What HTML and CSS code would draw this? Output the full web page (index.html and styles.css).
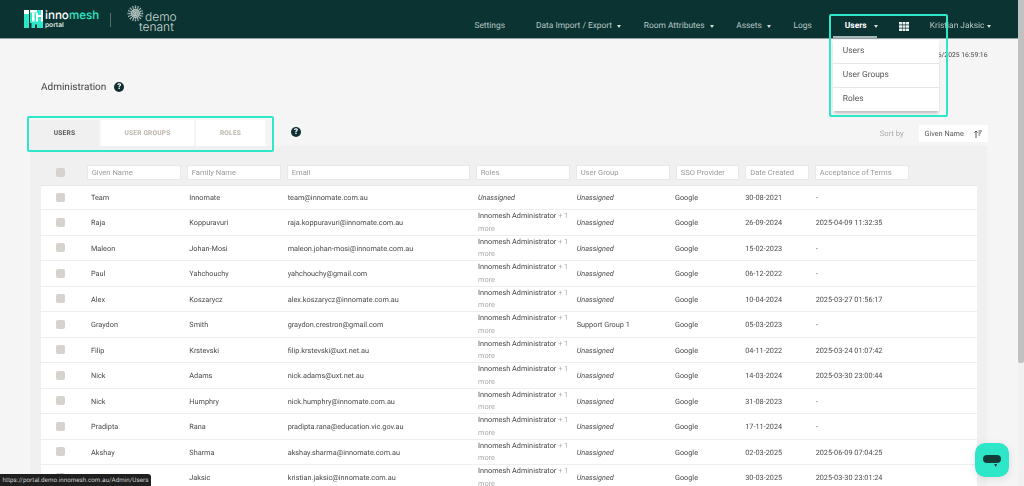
FILE: index.html
```html
<!DOCTYPE html>
<html lang="en">
<head>
    <meta charset="UTF-8">
    <title>Administration - innomesh portal</title>
    <link rel="stylesheet" href="styles.css">
</head>
<body>
    <div class="page">
        <div class="main">
            <header class="topbar">
                <div class="brand">
                    <svg class="brand-mark" width="19" height="18" viewBox="0 0 19 18">
                        <rect width="19" height="18" fill="#2ee6c8"/>
                        <rect x="0" y="0" width="5" height="4" fill="#fff"/>
                        <rect x="6" y="0" width="7" height="2.5" fill="#fff"/>
                        <rect x="8" y="2.5" width="2.5" height="9" fill="#fff"/>
                        <rect x="12" y="3" width="2" height="8.5" fill="#fff"/>
                        <rect x="17" y="0" width="2" height="11.5" fill="#fff"/>
                        <rect x="14" y="5" width="3" height="2" fill="#fff"/>
                        <rect x="5.5" y="13" width="2" height="5" fill="#0a3331"/>
                        <rect x="11" y="14.5" width="2" height="3.5" fill="#0a3331"/>
                        <rect x="5" y="0" width="1" height="18" fill="#0a3331"/>
                    </svg>
                    <div class="brand-name">
                        <div class="brand-title">inno<span>mesh</span></div>
                        <div class="brand-sub">portal</div>
                    </div>
                    <div class="brand-divider"></div>
                    <div class="tenant">
                        <svg class="tenant-mark" width="17" height="17" viewBox="-9 -9 18 18">
                            <g stroke="#b4c4c1" stroke-width="1.4" stroke-dasharray="1.3 .4" fill="none">
                                <path d="M0 -8.5V8.5M-8.5 0H8.5M-6 -6L6 6M-6 6L6 -6M-3.2 -7.8L3.2 7.8M3.2 -7.8L-3.2 7.8M-7.8 -3.2L7.8 3.2M-7.8 3.2L7.8 -3.2"/>
                                <circle r="4"/>
                            </g>
                        </svg>
                        <div class="tenant-name"><span>demo</span><span class="tenant-second">tenant</span></div>
                    </div>
                </div>
                <nav class="nav">
                    <a class="nav-link plain">Settings</a>
                    <a class="nav-link">Data Import / Export<i class="caret"></i></a>
                    <a class="nav-link">Room Attributes<i class="caret"></i></a>
                    <a class="nav-link">Assets<i class="caret"></i></a>
                    <a class="nav-link plain logs">Logs</a>
                    <div class="nav-menu">
                        <a class="nav-link active"><span class="active-label">Users</span><i class="caret"></i></a>
                        <ul class="dropdown">
                            <li>Users</li>
                            <li>User Groups</li>
                            <li>Roles</li>
                        </ul>
                    </div>
                    <svg class="grid-icon" width="10" height="9" viewBox="0 0 10 9">
                        <path fill="#e9efee" d="M0 0h3v2.6H0zM3.5 0h3v2.6h-3zM7 0h3v2.6H7zM0 3.2h3v2.6H0zM3.5 3.2h3v2.6h-3zM7 3.2h3v2.6H7zM0 6.4h3V9H0zM3.5 6.4h3V9h-3zM7 6.4h3V9H7z"/>
                    </svg>
                    <a class="nav-link user">Kristian Jaksic<i class="caret small"></i></a>
                </nav>
            </header>

            <div class="content">
                <div class="sync-time">26/06/2025 16:59:16</div>
                <div class="title-row">
                    <h1>Administration</h1>
                    <span class="help">?</span>
                </div>
                <div class="toolbar">
                    <div class="tabs">
                        <div class="tab selected">Users</div>
                        <div class="tab wide">User Groups</div>
                        <div class="tab">Roles</div>
                    </div>
                    <span class="help tabs-help">?</span>
                    <div class="sort">
                        <span class="sort-label">Sort by</span>
                        <div class="sort-select">
                            <span>Given Name</span>
                            <svg width="8" height="8" viewBox="0 0 8 8">
                                <path fill="none" stroke="#444" stroke-width=".9" d="M2 8V1M.5 2.5L2 1l1.500 1.500M4.500 1H8M4.500 3H7M4.500 5H6"/>
                            </svg>
                        </div>
                    </div>
                </div>

                <div class="panel">
                    <div class="filters">
                        <span class="check"></span>
                        <input class="filter" placeholder="Given Name">
                        <input class="filter" placeholder="Family Name">
                        <input class="filter email" placeholder="Email">
                        <input class="filter" placeholder="Roles">
                        <input class="filter" placeholder="User Group">
                        <input class="filter short" placeholder="SSO Provider">
                        <input class="filter short" placeholder="Date Created">
                        <input class="filter" placeholder="Acceptance of Terms">
                    </div>
                    <div class="rows">
                        <div class="row first">
                            <span class="check"></span><span>Team</span><span>Innomate</span><span>team@innomate.com.au</span>
                            <em>Unassigned</em><em>Unassigned</em><span>Google</span><span>30-08-2021</span><span>-</span>
                        </div>
                        <div class="row">
                            <span class="check"></span><span>Raja</span><span>Koppuravuri</span><span>raja.koppuravuri@innomate.com.au</span>
                            <div class="role">Innomesh Administrator <span>+ 1 more</span></div><em>Unassigned</em><span>Google</span><span>26-09-2024</span><span>2025-04-09 11:32:35</span>
                        </div>
                        <div class="row">
                            <span class="check"></span><span>Maleon</span><span>Johan-Mosi</span><span>maleon.johan-mosi@innomate.com.au</span>
                            <div class="role">Innomesh Administrator <span>+ 1 more</span></div><em>Unassigned</em><span>Google</span><span>15-02-2023</span><span>-</span>
                        </div>
                        <div class="row">
                            <span class="check"></span><span>Paul</span><span>Yahchouchy</span><span>yahchouchy@gmail.com</span>
                            <div class="role">Innomesh Administrator <span>+ 1 more</span></div><em>Unassigned</em><span>Google</span><span>06-12-2022</span><span>-</span>
                        </div>
                        <div class="row">
                            <span class="check"></span><span>Alex</span><span>Koszarycz</span><span>alex.koszarycz@innomate.com.au</span>
                            <div class="role">Innomesh Administrator <span>+ 1 more</span></div><em>Unassigned</em><span>Google</span><span>10-04-2024</span><span>2025-03-27 01:56:17</span>
                        </div>
                        <div class="row">
                            <span class="check"></span><span>Graydon</span><span>Smith</span><span>graydon.crestron@gmail.com</span>
                            <div class="role">Innomesh Administrator <span>+ 1 more</span></div><span>Support Group 1</span><span>Google</span><span>05-03-2023</span><span>-</span>
                        </div>
                        <div class="row">
                            <span class="check"></span><span>Filip</span><span>Krstevski</span><span>filip.krstevski@uxt.net.au</span>
                            <div class="role">Innomesh Administrator <span>+ 1 more</span></div><em>Unassigned</em><span>Google</span><span>04-11-2022</span><span>2025-03-24 01:07:42</span>
                        </div>
                        <div class="row">
                            <span class="check"></span><span>Nick</span><span>Adams</span><span>nick.adams@uxt.net.au</span>
                            <div class="role">Innomesh Administrator <span>+ 1 more</span></div><em>Unassigned</em><span>Google</span><span>14-03-2024</span><span>2025-03-30 23:00:44</span>
                        </div>
                        <div class="row">
                            <span class="check"></span><span>Nick</span><span>Humphry</span><span>nick.humphry@innomate.com.au</span>
                            <div class="role">Innomesh Administrator <span>+ 1 more</span></div><em>Unassigned</em><span>Google</span><span>31-08-2023</span><span>-</span>
                        </div>
                        <div class="row">
                            <span class="check"></span><span>Pradipta</span><span>Rana</span><span>pradipta.rana@education.vic.gov.au</span>
                            <div class="role">Innomesh Administrator <span>+ 1 more</span></div><em>Unassigned</em><span>Google</span><span>17-11-2024</span><span>-</span>
                        </div>
                        <div class="row">
                            <span class="check"></span><span>Akshay</span><span>Sharma</span><span>akshay.sharma@innomate.com.au</span>
                            <div class="role">Innomesh Administrator <span>+ 1 more</span></div><em>Unassigned</em><span>Google</span><span>02-03-2025</span><span>2025-06-09 07:04:25</span>
                        </div>
                        <div class="row">
                            <span class="check"></span><span>Kristian</span><span>Jaksic</span><span>kristian.jaksic@innomate.com.au</span>
                            <div class="role">Innomesh Administrator <span>+ 1 more</span></div><em>Unassigned</em><span>Google</span><span>30-03-2025</span><span>2025-03-30 23:01:24</span>
                        </div>
                    </div>
                </div>
            </div>
        </div>
        <div class="scrollbar"><div class="scroll-thumb"></div></div>
    </div>

    <!-- highlight frames drawn over the screenshot -->
    <div class="frame frame-menu"></div>
    <div class="frame frame-tabs"></div>

    <div class="status-url">https://portal.demo.innomesh.com.au/Admin/Users</div>
    <button class="chat-btn"><span class="chat-bubble"></span></button>
</body>
</html>
```

FILE: styles.css
```css
* {
    margin: 0;
    padding: 0;
    box-sizing: border-box;
}

body {
    background: #f5f5f5;
    color: #4a4a4a;
    font-family: Roboto, "Liberation Sans", sans-serif;
    font-size: 7.3px;
    text-rendering: geometricPrecision;
    overflow: hidden;
    height: 486px;
}

.page {
    display: flex;
    height: 486px;
    overflow: hidden;
    opacity: 0.999; /* grey text edges, no colour fringe */
}

.main {
    flex: 1;
    min-width: 0;
}

.scrollbar {
    width: 6.5px;
    background: #f1f1f1;
}

.scroll-thumb {
    height: 363px;
    background: #c1c1c1;
    border-radius: 0 0 2px 2px;
}

/* top bar */
.topbar {
    display: flex;
    align-items: center;
    height: 39px;
    background: #0a3331;
    border-bottom: 1px solid #8fa3a0;
    padding: 0 0 0 24px;
}

.brand {
    display: flex;
    align-items: flex-start;
    height: 39px;
}

.brand-mark {
    margin-top: 10px;
}

.brand-name {
    margin: 8px 0 0 2px;
    width: 65px;
}

.brand-title {
    font-family: Inter, sans-serif;
    font-size: 11.6px;
    line-height: 14px;
    font-weight: 500;
    color: #fff;
}

.brand-title span {
    color: #2ee6c8;
}

.brand-sub {
    font-family: Inter, sans-serif;
    font-size: 6.6px;
    line-height: 7px;
    font-weight: 600;
    color: #dfe8e6;
}

.brand-divider {
    width: 1px;
    height: 14px;
    margin-top: 13px;
    background: #55706d;
}

.tenant {
    display: flex;
    margin-left: 16px;
}

.tenant-mark {
    margin-top: 5px;
}

.tenant-name {
    display: flex;
    flex-direction: column;
    align-items: flex-end;
    margin: 12px 0 0 -5px;
    font-family: Inter, sans-serif;
    font-size: 12px;
    line-height: 10.500px;
    font-weight: 300;
    color: #cdd8d6;
}

.tenant-second {
    margin-right: 3px;
}

.nav {
    display: flex;
    align-items: center;
    gap: 21px;
    margin-left: auto;
    padding-right: 27px;
    height: 38px;
    padding-top: 14px;
    font-size: 8.4px;
    color: #b9c7c5;
}

.nav-link {
    display: flex;
    align-items: center;
    white-space: nowrap;
}

.nav-link.plain {
    margin-right: 10px;
}

.nav-link.logs {
    margin-right: 10.500px;
}

.caret {
    display: inline-block;
    width: 0;
    height: 0;
    margin: 0 1.700px 0 5px;
    border-left: 2.5px solid transparent;
    border-right: 2.5px solid transparent;
    border-top: 3px solid #d5dedc;
}

.caret.small {
    margin: 0 0 0 2px;
}

.nav-menu {
    position: relative;
    margin-left: -10px;
}

.active {
    color: #fff;
    font-weight: 700;
}

.active-label {
    display: block;
    width: 43.500px;
    padding: 0 0 0 11.500px;
    height: 24px;
    line-height: 24px;
    border-bottom: 2px solid #a9b8b6;
}

.active .caret {
    margin: 0 0 0 -3px;
}

.dropdown {
    position: absolute;
    top: 26px;
    left: 0;
    width: 106px;
    list-style: none;
    background: #fff;
    box-shadow: 0 3px 3px -1px rgba(0, 0, 0, 0.25);
    z-index: 10;
    font-weight: 400;
    color: #555;
}

.dropdown li {
    height: 24px;
    line-height: 23px;
    padding-left: 9.500px;
    border-bottom: 1px solid #e6e6e6;
}

.dropdown li:last-child {
    height: 23px;
    border-bottom: 0;
}

/* page content */
.content {
    position: relative;
    padding: 0 30px;
}

.sync-time {
    position: absolute;
    top: 11.500px;
    right: 30px;
    font-size: 6.8px;
    color: #444;
}

.title-row {
    display: flex;
    align-items: center;
    gap: 8px;
    padding: 15px 0 0 11px;
    height: 81px;
}

h1 {
    font-size: 10px;
    font-weight: 400;
    color: #444;
}

.help {
    display: inline-block;
    width: 10px;
    height: 10px;
    border-radius: 50%;
    background: #0f2f33;
    color: #fff;
    font-size: 8px;
    font-weight: 900;
    line-height: 10px;
    text-align: center;
}

.toolbar {
    display: flex;
    align-items: flex-start;
    height: 26px;
}

.tabs {
    display: flex;
    gap: 2px;
}

.tab {
    width: 69px;
    height: 26px;
    line-height: 26px;
    background: #fff;
    text-align: center;
    text-transform: uppercase;
    font-size: 6.6px;
    letter-spacing: 0.2px;
    font-weight: 700;
    color: #bbb3aa;
}

.tab.wide {
    width: 93px;
}

.tab.selected {
    background: #f0f0f0;
    color: #555;
}

.tabs-help {
    margin: 7px 0 0 26px;
}

.sort {
    display: flex;
    align-items: center;
    gap: 15px;
    margin-left: auto;
    margin-top: 5px;
}

.sort-label {
    color: #aaa;
    font-size: 7.600px;
}

.sort-select {
    display: flex;
    align-items: center;
    justify-content: space-between;
    width: 69px;
    height: 17px;
    padding: 0 6px;
    background: #fff;
    color: #555;
}

/* users table */
.panel {
    width: 957px;
    background: #f0f0f0;
    padding: 19px 10px 0 11px;
    height: 340px;
}

.check {
    display: block;
    width: 9px;
    height: 9px;
    border-radius: 2px;
    background: #d6d2ce;
}

.filters {
    display: flex;
    align-items: center;
    gap: 6px;
    height: 20px;
    padding-bottom: 5px;
}

.filters .check {
    margin: 0 15.700px 0 15px;
}

.filter {
    width: 94px;
    height: 15px;
    padding: 0 4px;
    border: 1px solid #e8e8e8;
    background: #fff;
    font-family: inherit;
    font-size: 7.600px;
}

.filter::placeholder {
    color: #999;
}

.filter.email {
    width: 183px;
}

.filter.short {
    width: 63.500px;
}

.rows {
    background: #fff;
    border-top: 1px solid #e6e6e6;
}

.row {
    display: grid;
    grid-template-columns: 50px 98.300px 98.400px 190.300px 98.700px 98.300px 70.300px 70.400px 1fr;
    align-items: center;
    height: 25.500px;
    border-bottom: 1px solid #eee;
}

.row.first {
    height: 24px;
}

.row .check {
    margin-left: 15px;
    margin-top: -1px;
}

.row em {
    font-style: italic;
}

.role {
    width: 92px;
    line-height: 12.800px;
}

.role span {
    color: #aaa;
}

/* overlays */
.frame {
    position: absolute;
    border: 2.500px solid #2ee6c8;
    border-radius: 2px;
    pointer-events: none;
    z-index: 20;
}

.frame-menu {
    left: 829px;
    top: 14px;
    width: 118.500px;
    height: 103px;
}

.frame-tabs {
    left: 26.500px;
    top: 116px;
    width: 247.500px;
    height: 35.500px;
}

.status-url {
    position: absolute;
    left: 0;
    bottom: 0;
    width: 151px;
    height: 12px;
    line-height: 12px;
    padding-left: 2.500px;
    background: #1f1f1f;
    border-radius: 0 3px 0 0;
    color: #ccc;
    font-size: 6.300px;
    white-space: nowrap;
    overflow: hidden;
    opacity: 0.999;
    z-index: 30;
}

.chat-btn {
    position: absolute;
    left: 975px;
    top: 443px;
    width: 34px;
    height: 34px;
    border: 0;
    border-radius: 10px;
    background: #2ee6c8;
    box-shadow: 0 2px 8px rgba(0, 0, 0, 0.1);
    z-index: 30;
}

.chat-bubble {
    display: block;
    position: relative;
    width: 18px;
    height: 7.500px;
    margin: 0 auto 2px;
    border-radius: 4px;
    background: #123c38;
}

.chat-bubble::after {
    content: "";
    position: absolute;
    right: 4px;
    top: 9px;
    border-left: 2px solid transparent;
    border-right: 1px solid transparent;
    border-top: 3px solid #123c38;
}
```
